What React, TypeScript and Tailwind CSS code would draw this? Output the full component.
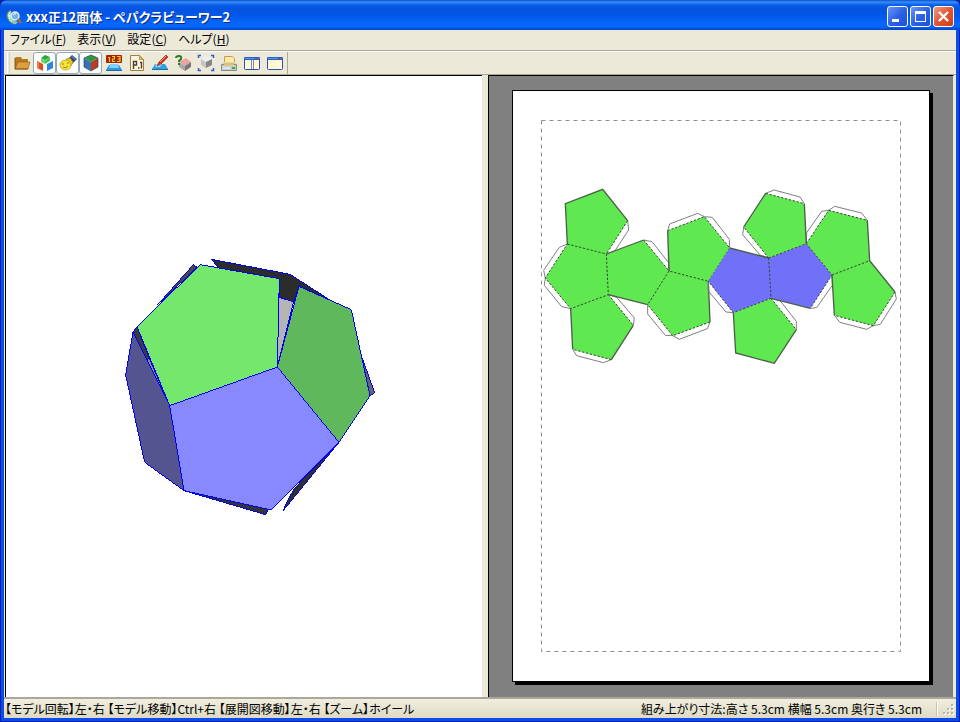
import type { ReactNode } from "react";

const uiFont =
  "font-['Noto_Sans_CJK_JP','Liberation_Sans',sans-serif] [font-feature-settings:'palt']";

/* ---------- Toolbar icons ---------- */

const FolderIcon = () => (
  <>
    <path d="M2 4l1-1h5l1 2h6v3H2z" fill="#b9791c" />
    <path d="M2 5v10h13V6H8L7 4H3z" fill="#b9791c" />
    <path d="M5 8h12l-2 7H2z" fill="#dda040" stroke="#9a6414" strokeWidth=".7" />
    <path d="M2 4v11h13" fill="none" stroke="#8a5a10" />
  </>
);
const OpenCubeIcon = () => (
  <>
    <path d="M9 1l5 2-5 3-4-2z" fill="#27a83c" />
    <path d="M5 4l4 2v4l-4-2z" fill="#74d070" />
    <path d="M9 6l5-3v4l-5 3z" fill="#4fc65a" />
    <path d="M1 7l6 3v7l-6-3z" fill="#e54820" />
    <path d="M11 10l6-3v7l-6 3z" fill="#2c86dc" />
    <path d="M1 7l2 1v7l-2-1z" fill="#f08050" />
  </>
);
const FlashlightIcon = () => (
  <>
    <path d="M9 5l4-4 5 4-5 5z" fill="#33456c" />
    <path d="M12 3l2-1 3 3-1 1z" fill="#6478a4" />
    <path d="M7 5l4-1 3 4-2 4z" fill="#e6ca20" stroke="#a28210" strokeWidth=".6" />
    <ellipse cx="6.500" cy="11" rx="5.500" ry="5" fill="#f4e43c" stroke="#b4a020" strokeWidth=".8" />
    <path d="M3 10h2M8 9h2M4 13q3 2 5-1" fill="none" stroke="#a07c10" />
  </>
);
const CubeIcon = () => (
  <>
    <path d="M9 1l7 3-7 4-7-4z" fill="#2c9a38" />
    <path d="M2 4l7 4v9l-7-4z" fill="#3474b4" />
    <path d="M9 8l7-4v9l-7 4z" fill="#bd3d20" />
    <path d="M9 1l7 3v9l-7 4-7-4V4z" fill="none" stroke="#284868" strokeWidth=".7" />
  </>
);
const NumberIcon = () => (
  <>
    <path d="M4 11h10l3 5H1z" fill="#2c98dc" />
    <path d="M5 10h8l1 4H4z" fill="#80d0f8" />
    <path d="M1 16h16v1H1z" fill="#176dac" />
    <rect x="1" y="1" width="16" height="8" rx="1" fill="#a02408" />
    <path
      d="M3 3.500h1.500V8M7 2.500h2.500V5H7.500v2.500H10M12 2.500h3v5h-3M12.500 5H15"
      stroke="#ffc820"
      strokeWidth="1.200"
      fill="none"
    />
  </>
);
const PageNumberIcon = () => (
  <>
    <path d="M2.500 1.500h9l4 4v11h-13z" fill="#fbf5df" stroke="#a87c3c" />
    <path d="M11.500 1.500v4h4z" fill="#d8b878" stroke="#a87c3c" strokeWidth=".7" />
    <path
      d="M5.500 15V7.500H8.500v3.500H5.500M10 14h1.500M12 8.500h1.500V14.500"
      stroke="#4c4034"
      fill="none"
      strokeWidth="1.400"
    />
  </>
);
const PenIcon = () => (
  <>
    <path d="M4 10h10l3 5H1z" fill="#31a0e0" />
    <path d="M5 10h6l-2 3H4z" fill="#98dcfa" />
    <path d="M1 15h16v1H1z" fill="#176dac" />
    <path d="M6 12l2-4 7-7 2 2-7 7z" fill="#d83020" stroke="#911b12" strokeWidth=".6" />
    <path d="M9 8l6-6" stroke="#ff9680" />
  </>
);
const HelpCubeIcon = () => (
  <>
    <path d="M5 8l7-4 5 4-6 4z" fill="#eca2a2" />
    <path d="M5 8l6 4v5l-6-4z" fill="#a7a7a7" />
    <path d="M11 12l6-4v5l-6 4z" fill="#777" />
    <path d="M2 4q0-2 3-2t2 3l-2 2v1M5 9v2" fill="none" stroke="#2b7c24" strokeWidth="2" />
  </>
);
const FitIcon = () => (
  <>
    <path d="M9 2l6 3-6 3-5-3z" fill="#f0f0f0" />
    <path d="M4 5l5 3v6l-5-3z" fill="#c5c5c5" />
    <path d="M9 8l6-3v6l-6 3z" fill="#878787" />
    <path
      d="M1.500 4V1.500H4M14 1.500h2.500V4M1.500 14v2.500H4M14 16.500h2.500V14"
      fill="none"
      stroke="#345bd0"
      strokeWidth="1.500"
    />
  </>
);
const PrinterIcon = () => (
  <>
    <path d="M4.500 10V2.500h8l2 2V10" fill="#ffe8a8" stroke="#c69c48" />
    <path d="M3 8h12l2 3H1z" fill="#d4d5d5" />
    <path d="M1.500 10.500h15v6h-15z" fill="#c8ccca" stroke="#858c88" />
    <path d="M4 9h10v2H4z" fill="#e8bd54" />
    <path d="M12 13h3v2h-3z" fill="#38b51d" />
    <path d="M3 14h7" stroke="#fff" />
  </>
);
const WindowIcon = ({ split = false }: { split?: boolean }) => (
  <>
    <rect x="1.500" y="4.500" width="15" height="11" rx="1" fill="#fff7d8" stroke="#24559f" />
    <path d="M1 4q0-1 1-1h14q1 0 1 1v2H1z" fill="#2c60c0" />
    <path d="M2 4.500h10" stroke="#5f92e4" />
    <path d="M14 4h2v1h-2z" fill="#e3502d" />
    {split && <path d="M8.500 6v9M10.500 6v9" stroke="#7291b9" />}
  </>
);

const tools: { label: string; active?: boolean; icon: ReactNode }[] = [
  { label: "開く", icon: <FolderIcon /> },
  { label: "テクスチャ表示", active: true, icon: <OpenCubeIcon /> },
  { label: "光源", active: true, icon: <FlashlightIcon /> },
  { label: "立体表示", active: true, icon: <CubeIcon /> },
  { label: "辺の番号", icon: <NumberIcon /> },
  { label: "ページ番号", icon: <PageNumberIcon /> },
  { label: "線の色", icon: <PenIcon /> },
  { label: "対応する面", icon: <HelpCubeIcon /> },
  { label: "全体表示", icon: <FitIcon /> },
  { label: "印刷", icon: <PrinterIcon /> },
  { label: "2画面", icon: <WindowIcon split /> },
  { label: "1画面", icon: <WindowIcon /> },
];

const menus = [
  ["ファイル", "F"],
  ["表示", "V"],
  ["設定", "C"],
  ["ヘルプ", "H"],
];

/* ---------- Title bar ---------- */

const captionButton =
  "h-[21px] w-[21px] rounded-[3px] border border-white bg-linear-to-br";

function TitleBar() {
  return (
    <header className="flex h-[30px] shrink-0 items-center gap-1 rounded-t-[7px] bg-[linear-gradient(180deg,#0a50c8_0px,#3b8dfb_2px,#0a5fe8_5px,#0353df_9px,#0459ea_16px,#0668fd_24px,#0463f5_27px,#0144c4_30px)] pr-[6px] pl-[6px] pt-[3px]">
      <svg className="h-4 w-4" viewBox="0 0 16 16" aria-hidden="true">
        <path d="M5 1Q0 3 1 8t6 7q3 1 5-2Q7 12 6 8T5 1z" fill="#8cc8b0" />
        <path d="M5 1Q0 3 1 8t6 7" stroke="#4a8070" fill="none" />
        <path d="M4 3Q1 8 6 13M2 6l4 2" stroke="#edf8e8" fill="none" />
        <circle cx="9" cy="7" r="4" fill="#6fb4ee" stroke="#e1f0f5" strokeWidth="1.500" />
        <path d="M7 6q2-2 3-1" stroke="#fff" fill="none" />
        <path d="M12 10l3 4" stroke="#b36825" strokeWidth="2.500" />
      </svg>
      <h1 className="min-w-0 flex-1 truncate text-[13px] leading-5 font-bold text-white [text-shadow:1px_1px_0_#0a2a80]">
        xxx正12面体 - ペパクラビューワー2
      </h1>
      <div className="flex gap-[2px]">
        <button aria-label="最小化" className={`${captionButton} from-[#6a94f8] via-[#2c62e4] to-[#1c50dc]`}>
          <svg viewBox="0 0 19 19" aria-hidden="true"><path d="M4 12h7v3H4z" fill="#fff" /></svg>
        </button>
        <button aria-label="最大化" className={`${captionButton} from-[#6a94f8] via-[#2c62e4] to-[#1c50dc]`}>
          <svg viewBox="0 0 19 19" aria-hidden="true"><path d="M4 4h11v11H4zM5 7v7h9V7z" fill="#fff" fillRule="evenodd" /></svg>
        </button>
        <button aria-label="閉じる" className={`${captionButton} from-[#f09a80] via-[#e35532] to-[#cf3c14]`}>
          <svg viewBox="0 0 19 19" aria-hidden="true"><path d="M5 5l9 9M14 5l-9 9" stroke="#fff" strokeWidth="2.400" /></svg>
        </button>
      </div>
    </header>
  );
}

/* ---------- 3D model ---------- */

const modelFaces = [
  { fill: "#2c2c2c", points: "304,28 540,73 660,150 567,109 551,155 508,142 508,86 326,54" },
  { fill: "#484848", points: "250,44 261,52 143,164" },
  { fill: "#b4b4b4", points: "506,142 551,155 502,351" },
  { fill: "#686868", points: "755,320 794,428 780,437" },
  { fill: "#3c3c3c", points: "81,230 118,325 110,330 69,246" },
  { fill: "#8c8c8c", points: "110,330 118,325 179,467" },
  { fill: "#343434", points: "222,722 475,778 467,794" },
  { fill: "#303030", points: "687,577 554,714 540,738 518,784" },
  { fill: "#545490", points: "69,246 179,467 222,722 104,637 47,375" },
  { fill: "#74e86c", points: "271,44 508,86 502,351 179,467 81,230" },
  { fill: "#60b85c", points: "567,109 724,179 780,437 687,577 502,351" },
  { fill: "#8888ff", points: "179,467 502,351 687,577 484,780 222,722" },
];

function ModelView() {
  return (
    <section className="min-h-0 min-w-0 border-t border-l border-black bg-white">
      <svg className="h-full w-full" viewBox="6 76 476 621" role="img" aria-label="正12面体のモデル">
        <g transform="translate(110 250) scale(.333333)" shapeRendering="crispEdges" stroke="#0000f0" strokeWidth="3">
          {modelFaces.map((f) => (
            <polygon key={f.points} points={f.points} fill={f.fill} />
          ))}
        </g>
      </svg>
    </section>
  );
}

/* ---------- Unfolded net ---------- */

type NetPart = { x: number; green: string; blue: string; tabs: string; cuts: string; folds: string };

const netParts: NetPart[] = [
  {
    x: 535,
    green:
      "M91 71L203 28 278 122 214 222 97 192z M97 192L214 222 220 344 107 386 31 294z M220 344L295 436 229 539 113 508 107 386z M214 222L326 180 402 273 338 374 220 344z M398 152L508 110 584 204 520 304 402 273z M402 273L520 304 525 426 413 467 338 374z",
    blue: "",
    tabs:
      "M278 122L281 150 240 212 214 222 M97 192L73 202 26 271 31 294 28 316 80 380 107 386 M220 344L245 352 298 414 295 436 M229 539L205 548 125 527 113 508 M326 180L351 185 401 248 402 273 M398 152L404 132 488 100 508 110 532 112 583 178 584 204 M338 374L338 402 391 466 413 467 433 478 517 446 525 426",
    cuts:
      "M97 192L91 71 203 28 278 122 M214 222L326 180 M220 344L338 374 M107 386L113 508 M229 539L295 436 M398 152L402 273 M520 304L525 426",
    folds:
      "M278 122L214 222 M97 192L214 222 220 344 107 386 31 294z M220 344L295 436 M229 539L113 508 M326 180L402 273 338 374 M398 152L508 110 584 204 520 304 402 273 M525 426L413 467 338 374",
  },
  {
    x: 700,
    green:
      "M213 355L289 449 223 550 107 519 100 398z M197 40L313 71 319 191 206 234 131 141z M386 91L502 121 509 242 396 285 319 191z M509 242L585 336 520 437 403 406 396 285z",
    blue: "M89 204L206 234 213 355 100 398 25 304z M206 234L319 191 396 285 331 385 213 355z",
    tabs:
      "M25 304L24 332 78 396 100 398 M396 285L397 316 350 383 331 385 M213 355L241 363 289 424 289 449 M197 40L222 30 300 51 313 71 M131 141L128 164 180 225 206 234 M386 91L404 79 485 99 502 121 M319 191L320 158 365 94 386 91 M585 336L589 357 541 433 520 437 500 448 420 427 403 406",
    cuts:
      "M89 204L206 234 M213 355L331 385 M100 398L107 519 223 550 289 449 M131 141L197 40 M313 71L319 191 M502 121L509 242 585 336 M396 285L403 406",
    folds:
      "M206 234L213 355 100 398 25 304 M206 234L319 191 396 285 331 385 M213 355L289 449 M197 40L313 71 M206 234L131 141 M386 91L502 121 M319 191L386 91 M396 285L509 242 M585 336L520 437 403 406",
  },
];

function NetView() {
  return (
    <section className="flex min-h-0 min-w-0 items-center justify-center border border-r-[#ece9d8] border-b-0 border-black bg-[#808080] pt-[14px] pb-[15px]">
      <div className="aspect-[418/592] h-full max-w-full border border-black bg-white shadow-[3px_3px_0_#000]">
        <svg className="h-full w-full" viewBox="513 91 416 590" role="img" aria-label="展開図">
          <rect x="541.500" y="120.500" width="359" height="531" fill="none" stroke="#909090" strokeDasharray="4 4" />
          {netParts.map((p) => (
            <g key={p.x} transform={`translate(${p.x} 180) scale(.333333)`} fill="none" strokeWidth="3">
              <path d={p.green} fill="#60e850" />
              <path d={p.blue} fill="#7070f8" />
              <path d={p.tabs} stroke="#808080" />
              <path d={p.folds} stroke="#334433" strokeDasharray="7 5" />
              <path d={p.cuts} stroke="#4a5f4a" strokeWidth="4" />
            </g>
          ))}
        </svg>
      </div>
    </section>
  );
}

export default function App() {
  return (
    <div className={`${uiFont} flex h-screen flex-col overflow-hidden bg-[#0020a8] text-[12px] leading-4 text-black`}>
      <TitleBar />
      <div className="mx-px mb-px flex min-h-0 flex-1 flex-col border-x-[3px] border-b-[3px] border-[#0a4cec] bg-[#ece9d8]">
        <nav className="flex h-[21px] shrink-0 items-center gap-[11px] border-b border-[#aca899] px-[6px] pb-[2px]">
          {menus.map(([name, key]) => (
            <button key={name} className="whitespace-nowrap">
              {name}(<span className="underline">{key}</span>)
            </button>
          ))}
        </nav>
        <div className="flex h-[23px] shrink-0 border-t border-white">
          <div className="ml-[3px] w-[3px] border-r border-l border-r-[#d8d4c4] border-l-white" />
          <div className="flex border-r border-[#aca899] pr-px" role="toolbar">
            {tools.map((t) => (
              <button
                key={t.label}
                aria-label={t.label}
                aria-pressed={t.active}
                className={`flex h-[22px] w-[23px] items-center justify-center rounded-[3px] border ${
                  t.active ? "border-[#8faab8] bg-white" : "border-transparent"
                }`}
              >
                <svg className="h-[18px] w-[18px] shrink-0" viewBox="0 0 18 18" aria-hidden="true">
                  {t.icon}
                </svg>
              </button>
            ))}
          </div>
        </div>
        <main className="grid min-h-0 flex-1 grid-cols-[477fr_466fr] gap-[6px] border-t border-[#aca899] pr-[2px] pl-[1px]">
          <ModelView />
          <NetView />
        </main>
        <footer className="flex h-[21px] shrink-0 items-center justify-between gap-4 border-t-2 border-[#aca899] bg-linear-to-b from-[#f0eee0] to-[#dedac4] pl-[1px] whitespace-nowrap">
          <span>【モデル回転】左・右 【モデル移動】Ctrl+右 【展開図移動】左・右 【ズーム】ホイール</span>
          <div className="flex items-center">
            <span>組み上がり寸法:高さ 5.3cm 横幅 5.3cm 奥行き 5.3cm</span>
            <span className="ml-[14px] h-[14px] w-[2px] border-r border-l border-r-white border-l-[#c8c4b0]" />
            <svg className="ml-[4px] h-[14px] w-[14px]" viewBox="0 0 14 14" aria-hidden="true">
              <path d="M9 2h2v2H9zM5 6h2v2H5zM9 6h2v2H9zM1 10h2v2H1zM5 10h2v2H5zM9 10h2v2H9z" fill="#fff" transform="translate(1 1)" />
              <path d="M9 2h2v2H9zM5 6h2v2H5zM9 6h2v2H9zM1 10h2v2H1zM5 10h2v2H5zM9 10h2v2H9z" fill="#b8b4a0" />
            </svg>
          </div>
        </footer>
      </div>
    </div>
  );
}
